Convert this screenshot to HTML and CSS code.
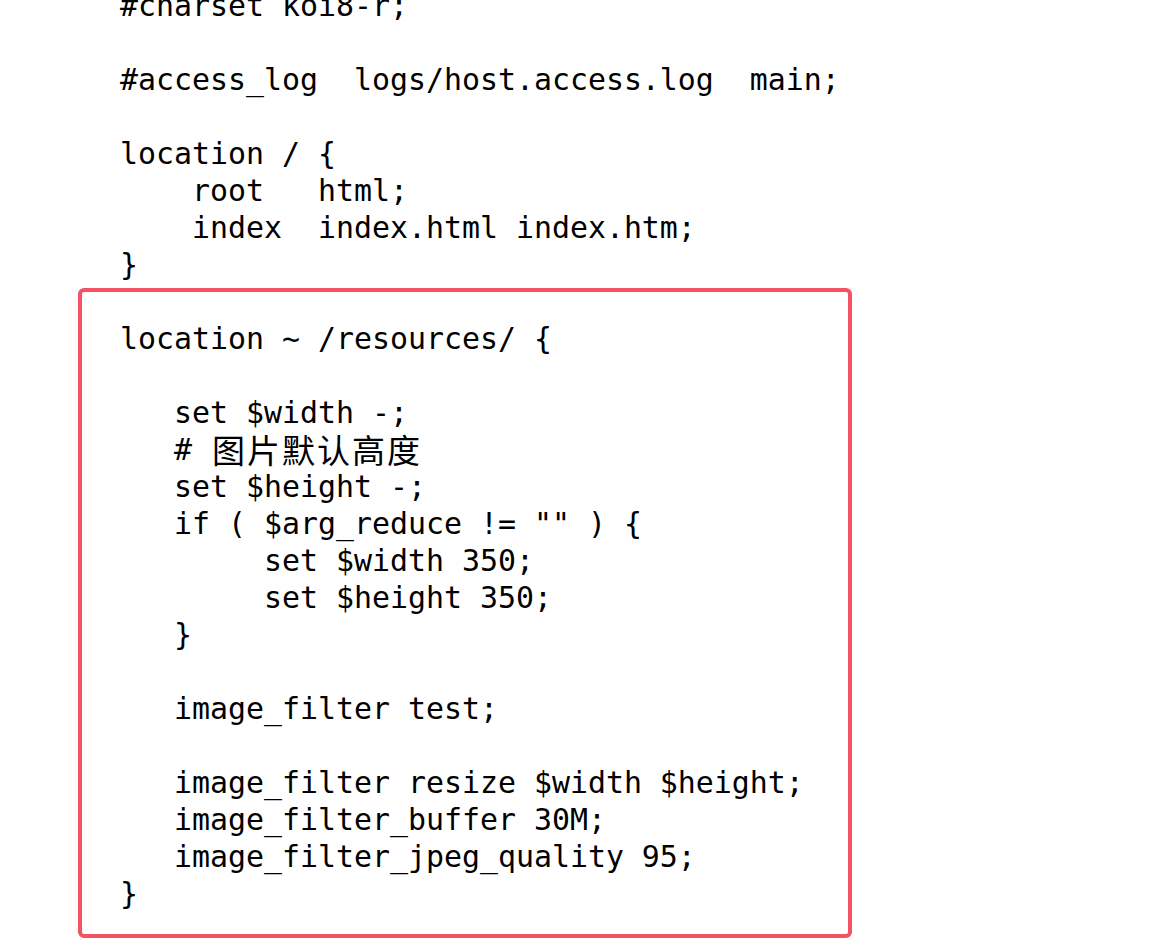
FILE: index.html
```html
<!DOCTYPE html>
<html lang="zh-CN">
<head>
<meta charset="utf-8">
<title>nginx image_filter</title>
<link rel="stylesheet" href="styles.css">
</head>
<body>
<main class="page">
<pre class="code code-top">#charset koi8-r;

#access_log  logs/host.access.log  main;

location / {
    root   html;
    index  index.html index.htm;
}</pre>
<div class="highlight">
<pre class="code">location ~ /resources/ {

   set $width -;
   # <span class="cjk">图片默认高度</span>
   set $height -;
   if ( $arg_reduce != "" ) {
        set $width 350;
        set $height 350;
   }

   image_filter test;

   image_filter resize $width $height;
   image_filter_buffer 30M;
   image_filter_jpeg_quality 95;
}</pre>
</div>
</main>
</body>
</html>
```
FILE: styles.css
```css
html, body {
  margin: 0;
  padding: 0;
  background: #ffffff;
}

.page {
  margin-top: -13.5px;
  display: flex;
  flex-direction: column;
  align-items: flex-start;
}

.code {
  margin: 0;
  font-family: "DejaVu Sans Mono", "Liberation Mono", "Noto Sans CJK SC", monospace;
  font-size: 29.9px;
  line-height: 37px;
  color: #000000;
  white-space: pre;
}

.code-top {
  margin-left: 120px;
}

.highlight {
  box-sizing: border-box;
  width: 774px;
  margin-top: 5.5px;
  margin-left: 78px;
  border: 4px solid #f45366;
  border-radius: 6px;
  padding: 27.5px 20px 22.5px 38px;
}

.cjk {
  display: inline-block;
  height: 37px;
  vertical-align: top;
  font-family: "Noto Sans CJK SC", sans-serif;
  font-size: 33px;
  letter-spacing: 2px;
  line-height: 37px;
  margin-left: 2px;
}
```
